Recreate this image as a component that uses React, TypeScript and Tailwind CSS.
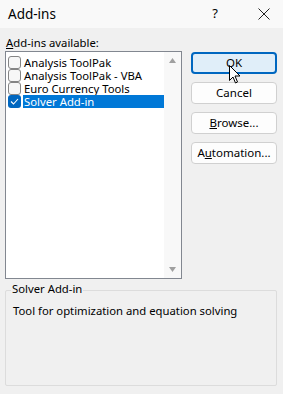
import React from 'react'

const items = [
  { name: 'Analysis ToolPak', checked: false },
  { name: 'Analysis ToolPak - VBA', checked: false },
  { name: 'Euro Currency Tools', checked: false },
  { name: 'Solver Add-in', checked: true }
]

function Check({ checked }: { checked: boolean }) {
  if (checked)
    return (
      <span className="flex h-[13px] w-[13px] shrink-0 items-center justify-center rounded-[3px] bg-[#0067c0]">
        <svg width="9" height="7" viewBox="0 0 9 7">
          <path d="M1 3.5 L3.5 6 L8 1" fill="none" stroke="white" strokeWidth="1.1" />
        </svg>
      </span>
    )
  return <span className="h-[13px] w-[13px] shrink-0 rounded-[3px] border border-[#858585] bg-[#f7f7f7]" />
}

function Btn({ children, focused }: { children: React.ReactNode; focused?: boolean }) {
  return (
    <button
      className={
        focused
          ? 'flex h-[22px] w-[86px] items-center justify-center rounded-[4px] border-2 border-[#0067c0] bg-[#e0eef9] text-[11.5px] text-black'
          : 'flex h-[22px] w-[86px] items-center justify-center rounded-[4px] border border-[#d0d0d0] bg-[#fdfdfd] text-[11.5px] text-black'
      }
    >
      {children}
    </button>
  )
}

export default function App() {
  return (
    <div
      className="relative h-[394px] w-[283px] overflow-hidden bg-[#f0f0f0] text-black"
      style={{ fontFamily: '"Noto Sans", "Open Sans", sans-serif' }}
    >
      {/* title bar */}
      <div className="flex h-[28px] items-center bg-[#f9f9f9] pl-[8px]">
        <span className="text-[13.5px]">Add-ins</span>
        <span className="ml-auto mr-[40px] text-[13px]">?</span>
        <svg className="mr-[13px]" width="12" height="12" viewBox="0 0 12 12">
          <path d="M0.5 0.5 L11.5 11.5 M11.5 0.5 L0.5 11.5" stroke="#222" strokeWidth="1" />
        </svg>
      </div>

      <div className="px-[5px] pt-[7px]">
        <div className="pl-[1px] text-[11.3px] leading-[16px]">
          <span className="underline">A</span>dd-ins available:
        </div>

        <div className="flex gap-[9px]">
          {/* list */}
          <div className="flex h-[228px] w-[177px] border border-[#828790] bg-white">
            <div className="flex-1 pt-[4px]">
              {items.map((it) => (
                <div key={it.name} className="flex h-[13px] items-center gap-[2px] pl-[2px]">
                  <Check checked={it.checked} />
                  <span
                    className={
                      it.checked
                        ? 'flex h-[13px] flex-1 items-center bg-[#0078d7] pl-[1px] text-[11.3px] leading-[13px] text-white'
                        : 'flex h-[13px] flex-1 items-center pl-[1px] text-[11.3px] leading-[13px]'
                    }
                  >
                    {it.name}
                  </span>
                </div>
              ))}
            </div>
            <div className="flex w-[17px] flex-col items-center justify-between bg-[#f8f8f8] py-[6px]">
              <svg width="7" height="5" viewBox="0 0 7 5">
                <path d="M3.5 0 L7 5 L0 5 Z" fill="#a0a0a0" />
              </svg>
              <svg width="7" height="5" viewBox="0 0 7 5">
                <path d="M0 0 L7 0 L3.5 5 Z" fill="#a0a0a0" />
              </svg>
            </div>
          </div>

          {/* buttons */}
          <div className="relative flex flex-col gap-[8px] pt-[1px]">
            <Btn focused>OK</Btn>
            <Btn>Cancel</Btn>
            <Btn>
              <span className="underline">B</span>rowse...
            </Btn>
            <Btn>
              A<span className="underline">u</span>tomation...
            </Btn>
            <svg className="absolute left-[38px] top-[14px]" width="12" height="19" viewBox="0 0 12 19">
              <path
                d="M0.5 0.5 L0.5 15.5 L4 12 L6.5 18 L8.5 17 L6 11 L11 11 Z"
                fill="white"
                stroke="black"
                strokeWidth="1"
                strokeLinejoin="round"
              />
            </svg>
          </div>
        </div>

        {/* description group */}
        <div className="relative mt-[11px] h-[96px] w-[272px] rounded-[2px] border border-[#dcdcdc] px-[7px] pt-[12px]">
          <span className="absolute left-[5px] top-[-10px] bg-[#f0f0f0] px-[1px] text-[11.3px]">Solver Add-in</span>
          <div className="text-[11.3px]">Tool for optimization and equation solving</div>
        </div>
      </div>
    </div>
  )
}
